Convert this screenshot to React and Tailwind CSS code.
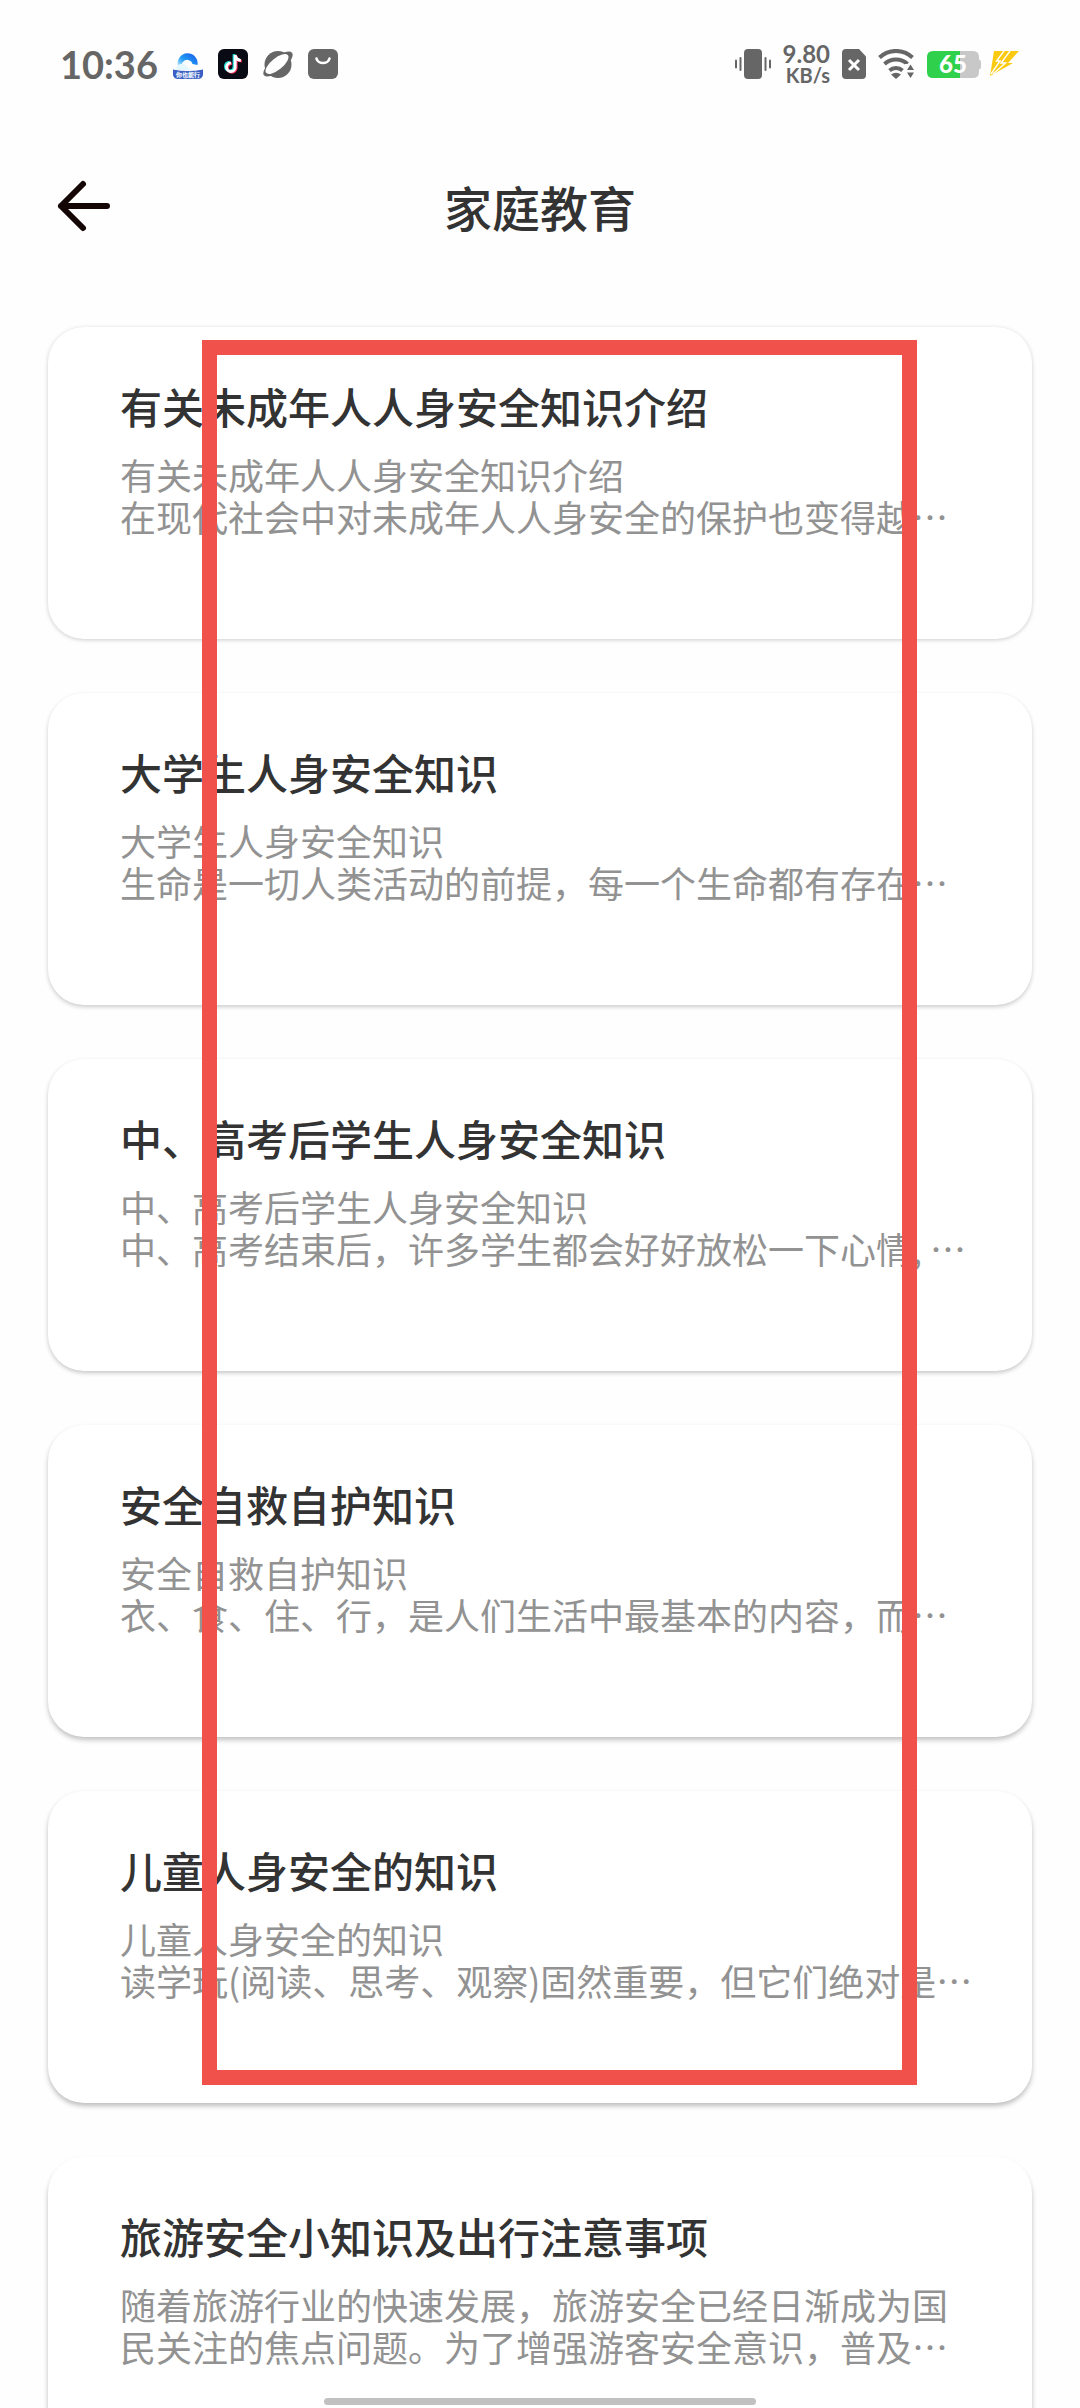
const articles = [
  {
    title: '有关未成年人人身安全知识介绍',
    summary: '有关未成年人人身安全知识介绍\n在现代社会中对未成年人人身安全的保护也变得越…',
    shadow: 'shadow-[0_1px_4px_rgba(0,0,0,0.2)]',
  },
  {
    title: '大学生人身安全知识',
    summary: '大学生人身安全知识\n生命是一切人类活动的前提，每一个生命都有存在…',
    shadow: 'shadow-[0_2px_4px_rgba(0,0,0,0.2)]',
  },
  {
    title: '中、高考后学生人身安全知识',
    summary: '中、高考后学生人身安全知识\n中、高考结束后，许多学生都会好好放松一下心情, …',
    shadow: 'shadow-[0_2px_4px_rgba(0,0,0,0.22)]',
  },
  {
    title: '安全自救自护知识',
    summary: '安全自救自护知识\n衣、食、住、行，是人们生活中最基本的内容，而…',
    shadow: 'shadow-[0_3px_5px_rgba(0,0,0,0.24)]',
  },
  {
    title: '儿童人身安全的知识',
    summary: '儿童人身安全的知识\n读学玩(阅读、思考、观察)固然重要，但它们绝对是…',
    shadow: 'shadow-[0_3px_5px_rgba(0,0,0,0.26)]',
  },
  {
    title: '旅游安全小知识及出行注意事项',
    summary: '随着旅游行业的快速发展，旅游安全已经日渐成为国民关注的焦点问题。为了增强游客安全意识，普及…',
    shadow: 'shadow-[0_4px_5px_rgba(0,0,0,0.26)]',
  },
];

function BrowserIcon() {
  return (
    <svg width="30" height="30" viewBox="0 0 30 30" className="overflow-visible">
      <defs>
        <linearGradient id="arch" x1="0" y1="1" x2="1" y2="0">
          <stop offset="0" stopColor="#d8f4ff" />
          <stop offset="0.45" stopColor="#1e9bf5" />
          <stop offset="1" stopColor="#1a55e8" />
        </linearGradient>
      </defs>
      <path d="M5 17a10 10 0 1 1 19.500-1l-5-1a5.500 5.500 0 0 0-10-1.500L8 19Z" fill="url(#arch)" />
      <path d="M3 20c1-5 7-7 10-3.500l5 4.500H3Z" fill="#e6f8ff" />
      <path d="M0 20.500q15 3 30 0V26q-1 4-5 4H5q-4 0-5-4Z" fill="#3a5fc4" />
      <text x="15" y="28" textAnchor="middle" fontSize="6" fontWeight="700" fill="#fff">你也能行</text>
    </svg>
  );
}

function MusicNoteIcon() {
  const note = 'M17.200 6v12.200a4.300 4.300 0 1 1-4.300-4.300M17.200 6c.4 3.200 2.600 5.200 5.600 5.400';
  return (
    <svg width="30" height="30" viewBox="0 0 30 30" fill="none" strokeWidth="2.800">
      <rect width="30" height="30" rx="6" fill="#080a14" />
      <path d={note} stroke="#25e4e0" transform="translate(-1.200 -.8)" />
      <path d={note} stroke="#f5315c" transform="translate(1 .8)" />
      <path d={note} stroke="#fff" />
    </svg>
  );
}

function PlanetIcon() {
  return (
    <svg width="30" height="30" viewBox="0 0 30 30">
      <circle cx="15" cy="15.500" r="13.500" fill="#666" />
      <ellipse cx="15" cy="15" rx="18" ry="7" fill="#666" transform="rotate(-39 15 15)" />
      <ellipse cx="14" cy="15" rx="14" ry="5.800" fill="#fefefe" transform="rotate(-39 14 15)" />
    </svg>
  );
}

function PocketIcon() {
  return (
    <svg width="30" height="30" viewBox="0 0 30 30">
      <rect width="30" height="30" rx="6" fill="#666" />
      <path d="M8.500 9.500a6.600 5.500 0 0 0 13 0" fill="none" stroke="#fff" strokeWidth="2.600" strokeLinecap="round" />
    </svg>
  );
}

function VibrateIcon() {
  return (
    <svg width="36" height="30" viewBox="0 0 36 30" fill="#666">
      <rect x="9" width="18" height="30" rx="4" />
      <rect x="4.500" y="8" width="2" height="14" rx="1" />
      <rect y="10.500" width="2" height="9" rx="1" />
      <rect x="29.500" y="8" width="2" height="14" rx="1" />
      <rect x="34" y="10.500" width="2" height="9" rx="1" />
    </svg>
  );
}

function NoSimIcon() {
  return (
    <svg width="24" height="30" viewBox="0 0 24 30">
      <path d="M4 0h13l7 7.500V26q0 4-4 4H4q-4 0-4-4V4Q0 0 4 0Z" fill="#666" />
      <path d="m7 11 10 10M17 11 7 21" stroke="#fff" strokeWidth="3" />
    </svg>
  );
}

function WifiIcon() {
  return (
    <svg width="37" height="30" viewBox="0 0 37 30" fill="none" stroke="#666" strokeWidth="4">
      <path d="M1.500 8.500a24 24 0 0 1 33 0" />
      <path d="M6.500 15a17 17 0 0 1 23 0" />
      <path d="M11.500 21.500a10 10 0 0 1 13 0" />
      <path d="M13 25.500q5-3.500 10 0l-5 4.500Z" fill="#666" stroke="none" />
      <path d="M27 15h10v15H27Z" fill="#fefefe" stroke="none" />
      <path d="m32.500 15.500 3.500 5.500h-7Zm0 13.500 3.500-5.500h-7Z" fill="#666" stroke="none" />
    </svg>
  );
}

function BatteryIcon() {
  return (
    <svg width="54" height="27" viewBox="0 0 54 27" className="overflow-visible">
      <path d="M33 0h13q6 0 6 6v2.500q2 .5 2 2.500v5q0 2-2 2.500V21q0 6-6 6H33Z" fill="#c8c8c8" />
      <path d="M6 0h27v27H6q-6 0-6-6V6Q0 0 6 0Z" fill="#2fd04c" />
      <text x="26" y="22" textAnchor="middle" fontSize="24" fontWeight="900" fill="#fff">65</text>
    </svg>
  );
}

function ChargingIcon() {
  return (
    <svg width="31" height="26" viewBox="0 0 31 26">
      <path d="M5 0h25L19 12h5L1 25Z" fill="#fbc910" />
      <path d="m15 0-7.500 10H11L2 23M21 0l-9 12h4.500L4 23" fill="none" stroke="#fefefe" strokeWidth="1.400" />
    </svg>
  );
}

function StatusBar() {
  return (
    <div className="flex h-32 shrink-0 items-center justify-between px-15 font-[Lato,sans-serif] text-[#666]">
      <div className="flex items-center gap-[15px]">
        <span className="text-[38px] leading-10 font-bold">10:36</span>
        <BrowserIcon />
        <MusicNoteIcon />
        <PlanetIcon />
        <PocketIcon />
      </div>
      <div className="flex items-center gap-3">
        <VibrateIcon />
        <div className="text-right font-bold">
          <div className="text-2xl leading-[22px]">9.80</div>
          <div className="text-xl leading-5">KB/s</div>
        </div>
        <NoSimIcon />
        <WifiIcon />
        <div className="flex items-center gap-2">
          <BatteryIcon />
          <ChargingIcon />
        </div>
      </div>
    </div>
  );
}

function ArticleCard({ article }) {
  return (
    <a
      href="#"
      className={`block h-[312px] rounded-[36px] bg-white pt-12 pr-13 pl-18 ${article.shadow}`}
    >
      <h2 className="text-[42px] leading-[62px] font-medium text-[#333]">{article.title}</h2>
      <p className="mt-4 text-4xl leading-[42px] whitespace-pre-line text-[#929292]">{article.summary}</p>
    </a>
  );
}

export default function App() {
  return (
    <div
      lang="zh-CN"
      className="relative flex h-screen flex-col overflow-hidden bg-[#fefefe] font-['Noto_Sans_CJK_SC',sans-serif]"
    >
      <StatusBar />
      <header className="grid h-39 shrink-0 grid-cols-[1fr_auto_1fr] items-center px-14">
        <button type="button" aria-label="返回" className="w-14">
          <svg width="56" height="56" viewBox="0 0 56 56" fill="none" stroke="#140605" strokeWidth="6" strokeLinecap="round" strokeLinejoin="round">
            <path d="M51 28H5M27 6 5 28l22 22" />
          </svg>
        </button>
        <h1 className="text-5xl font-medium text-[#333]">家庭教育</h1>
      </header>

      <main className="relative px-12 pt-[43px]">
        <ul className="flex flex-col gap-[54px]">
          {articles.map((article) => (
            <li key={article.title}>
              <ArticleCard article={article} />
            </li>
          ))}
        </ul>
        <div className="pointer-events-none absolute top-14 right-[163px] left-[202px] h-[1745px] border-[15px] border-[#f0524b]" />
      </main>

      <div className="absolute bottom-[3px] left-1/2 h-[7px] w-2/5 -translate-x-1/2 rounded-full bg-[#c1c1c1]" />
    </div>
  );
}
